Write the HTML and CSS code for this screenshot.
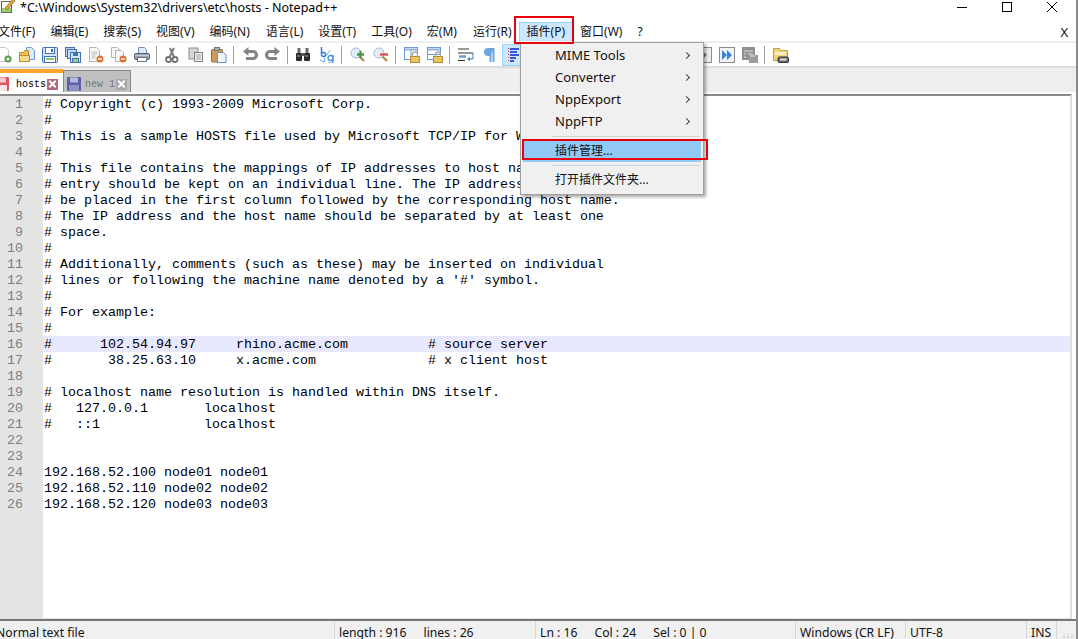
FILE: index.html
```html
<!DOCTYPE html>
<html>
<head>
	<title>Notepad++</title>
	<link rel="stylesheet" href="styles.css">
</head>
<body>
	<div class="window">
		<div class="titlebar">
			<svg class="app-icon" width="16" height="16" viewBox="0 0 16 16"><rect x="1.500" y="2.500" width="10" height="11" fill="#fff" stroke="#666"/><rect x="2" y="9" width="9" height="4" fill="#9ad067"/><path d="M5 9 L13 0 L15 2 L7 11 Z" fill="#e8a33a" stroke="#7a5a20" stroke-width=".6"/></svg>
			<span class="title">*C:\Windows\System32\drivers\etc\hosts - Notepad++</span>
			<div class="win-btns">
				<svg width="12" height="12" viewBox="0 0 12 12"><path d="M1 6.500H11" stroke="#000"/></svg>
				<svg width="12" height="12" viewBox="0 0 12 12"><rect x="1.500" y="1.500" width="9" height="9" fill="none" stroke="#000"/></svg>
				<svg width="12" height="12" viewBox="0 0 12 12"><path d="M1 1L11 11M11 1L1 11" stroke="#000"/></svg>
			</div>
		</div>
		<div class="menubar">
			<span class="menu-item">文件(F)</span>
			<span class="menu-item">编辑(E)</span>
			<span class="menu-item">搜索(S)</span>
			<span class="menu-item">视图(V)</span>
			<span class="menu-item">编码(N)</span>
			<span class="menu-item">语言(L)</span>
			<span class="menu-item">设置(T)</span>
			<span class="menu-item">工具(O)</span>
			<span class="menu-item">宏(M)</span>
			<span class="menu-item">运行(R)</span>
			<span class="menu-item active">插件(P)</span>
			<span class="menu-item">窗口(W)</span>
			<span class="menu-item">?</span>
			<span class="menu-close">X</span>
		</div>
		<div class="toolbar" id="toolbar"></div>
		<div class="tabbar">
			<div class="tab tab-on">
				<svg width="16" height="16" viewBox="0 0 16 16"><rect x="1" y="1" width="14" height="14" rx="1" fill="#e2505f"/><rect x="4" y="1.500" width="8" height="5" fill="#f6c9cc"/><rect x="3" y="9" width="10" height="6" fill="#fbe4e4"/></svg>
				<span>hosts</span>
				<i class="tab-x red"></i>
			</div>
			<div class="tab tab-off">
				<svg width="16" height="16" viewBox="0 0 16 16"><rect x="1" y="1" width="14" height="14" rx="1" fill="#5d5fa8"/><rect x="4" y="1.500" width="8" height="5" fill="#b9bbdc"/><rect x="3" y="9" width="10" height="6" fill="#8f91c4"/></svg>
				<span>new 1</span>
				<i class="tab-x gray"></i>
			</div>
		</div>
		<div class="editor">
			<div class="gutter" id="gutter"></div>
			<pre class="code" id="code"></pre>
		</div>
		<div class="statusbar">
			<div class="st st-type">Normal text file</div>
			<div class="st st-len"><span>length : 916</span><span>lines : 26</span></div>
			<div class="st st-pos"><span>Ln : 16</span><span>Col : 24</span><span>Sel : 0 | 0</span></div>
			<div class="st st-eol">Windows (CR LF)</div>
			<div class="st st-enc">UTF-8</div>
			<div class="st st-ins">INS</div>
			<svg class="grip" width="12" height="4" viewBox="0 0 12 4"><path d="M1 3h2M5 3h2M9 3h2M5 0h2M9 0h2" stroke="#b5b5b5" stroke-width="1"/></svg>
		</div>
	</div>

	<div class="plugin-menu">
		<div class="pm-item pm-lat">MIME Tools<b></b></div>
		<div class="pm-item pm-lat">Converter<b></b></div>
		<div class="pm-item pm-lat">NppExport<b></b></div>
		<div class="pm-item pm-lat">NppFTP<b></b></div>
		<div class="pm-sep"></div>
		<div class="pm-item pm-on">插件管理...</div>
		<div class="pm-sep"></div>
		<div class="pm-item">打开插件文件夹...</div>
	</div>
	<div class="mark mark-menu"></div>
	<div class="mark mark-item"></div>

<script>
	// editor text
	var lines = [
		"# Copyright (c) 1993-2009 Microsoft Corp.",
		"#",
		"# This is a sample HOSTS file used by Microsoft TCP/IP for Windows.",
		"#",
		"# This file contains the mappings of IP addresses to host names. Each",
		"# entry should be kept on an individual line. The IP address should",
		"# be placed in the first column followed by the corresponding host name.",
		"# The IP address and the host name should be separated by at least one",
		"# space.",
		"#",
		"# Additionally, comments (such as these) may be inserted on individual",
		"# lines or following the machine name denoted by a '#' symbol.",
		"#",
		"# For example:",
		"#",
		"#      102.54.94.97     rhino.acme.com          # source server",
		"#       38.25.63.10     x.acme.com              # x client host",
		"",
		"# localhost name resolution is handled within DNS itself.",
		"#   127.0.0.1       localhost",
		"#   ::1             localhost",
		"",
		"",
		"192.168.52.100 node01 node01",
		"192.168.52.110 node02 node02",
		"192.168.52.120 node03 node03"
	];
	var gutter = document.getElementById("gutter");
	var code = document.getElementById("code");
	lines.forEach(function(txt, i){
		var n = document.createElement("div");
		n.className = "line-no";
		n.textContent = i + 1;
		gutter.appendChild(n);
		var l = document.createElement("div");
		l.className = (i == 15) ? "line cur" : "line";
		l.textContent = txt || " ";
		code.appendChild(l);
	});

	// toolbar icons, 0 = separator
	var lock = '<rect x="6.500" y="9.500" width="9" height="6" fill="#ecc55f" stroke="#b08d33"/><path d="M8.500 9.500V7.500a2.500 2.500 0 0 1 5 0v2" fill="none" stroke="#a9a9a9" stroke-width="1.400"/>';
	var g = {
		newf: '<path d="M2.500 .5h7l3 3v11h-10z" fill="#fff" stroke="#c4c4c4"/><circle cx="12" cy="12" r="3.500" fill="#4f9a48"/><path d="M10 12h4M12 10v4" stroke="#fff"/>',
		open: '<path d="M7.500 .5h5l3 3v9h-8z" fill="#dce9f8" stroke="#6f9bd3"/><path d="M.5 5.500h4l1-2h4v11h-9z" fill="#eebf5a" stroke="#b88d30"/><rect x=".5" y="8.500" width="10" height="6" fill="#f7d98d" stroke="#b88d30"/>',
		save: '<rect x=".5" y=".5" width="15" height="15" rx="1" fill="#d6e4f6" stroke="#3f6fb5"/><rect x="3.500" y=".5" width="9" height="6" fill="#fff" stroke="#3f6fb5"/><rect x="9" y="2" width="2" height="3" fill="#3f6fb5"/><rect x="2.500" y="9.500" width="11" height="6" fill="#fff" stroke="#3f6fb5"/><rect x="4" y="11" width="8" height="2" fill="#8cc468"/>',
		saveall: '<rect x=".5" y=".5" width="9" height="9" fill="#b9cfeb" stroke="#3f6fb5"/><rect x="2.500" y="2.500" width="9" height="9" fill="#c9daf1" stroke="#3f6fb5"/><rect x="5.500" y="5.500" width="10" height="10" fill="#d6e4f6" stroke="#3f6fb5"/><rect x="8" y="6" width="5" height="3" fill="#3f6fb5"/><rect x="7.500" y="11.500" width="6" height="4" fill="#9ccf7c" stroke="#3f6fb5"/>',
		close: '<path d="M1.500 .5h7l3 3v11h-10z" fill="#f7f7f7" stroke="#b5b5b5"/><path d="M3.500 5h6M3.500 7h6M3.500 9h4M3.500 11h4" stroke="#bbb"/><circle cx="12" cy="12" r="3.500" fill="#e2702a"/><path d="M10 12h4" stroke="#fff" stroke-width="1.400"/>',
		closeall: '<path d="M.5 .5h6l2 2v8h-8z" fill="#f7f7f7" stroke="#b5b5b5"/><path d="M4.500 3.500h6l2 2v9h-8z" fill="#f7f7f7" stroke="#b5b5b5"/><circle cx="12" cy="12" r="3.500" fill="#e2702a"/><path d="M10 12h4" stroke="#fff" stroke-width="1.400"/>',
		print: '<path d="M4.500 6V.5h6l2 2V6" fill="#dfe9f6" stroke="#6f8fb8"/><rect x=".5" y="6.500" width="15" height="6" rx="1.500" fill="#9aa5b1" stroke="#59636e"/><rect x="3.500" y="10.500" width="9" height="4" fill="#fff" stroke="#6a7683"/><path d="M1 8.500h14" stroke="#c6ced6"/>',
		cut: '<circle cx="3.500" cy="12.500" r="2.500" fill="none" stroke="#707070" stroke-width="1.800"/><circle cx="10" cy="12.500" r="2.500" fill="none" stroke="#707070" stroke-width="1.800"/><path d="M4.500 10L9 1M9 10L5 1" stroke="#808080" stroke-width="2"/>',
		copy: '<rect x="1" y="1" width="9" height="11" fill="#d6d6d6" stroke="#8c8c8c"/><rect x="6.500" y="5.500" width="8" height="9" fill="#efefef" stroke="#808080"/><path d="M8 8h5M8 10h5M8 12h5" stroke="#a5a5a5"/>',
		paste: '<rect x=".5" y="2.500" width="11" height="12.500" rx="1" fill="#cf9a5c" stroke="#8b6b3d"/><rect x="3.500" y=".5" width="5" height="3" fill="#a8a8a8" stroke="#777"/><path d="M6.500 5.500h6l2.500 2.500v7.500h-8.500z" fill="#eef4fc" stroke="#5f8fd0"/>',
		undo: '<path d="M3 4.500h8a3.500 3.500 0 0 1 0 7H4" fill="none" stroke="#848484" stroke-width="3.200"/><path d="M6.500 0v9L1 4.500z" fill="#848484"/>',
		redo: '<path d="M13 4.500H5a3.500 3.500 0 0 0 0 7h7" fill="none" stroke="#848484" stroke-width="3.200"/><path d="M9.500 0v9L15 4.500z" fill="#848484"/>',
		find: '<rect x="0" y="6" width="6" height="8" rx="1" fill="#2c2c2c"/><rect x="8" y="6" width="6" height="8" rx="1" fill="#2c2c2c"/><rect x="1.500" y="1" width="3" height="5" fill="#6d6d6d"/><rect x="9.500" y="1" width="3" height="5" fill="#6d6d6d"/><rect x="5" y="6" width="4" height="3" fill="#555"/><path d="M1 9h3M9 9h3" stroke="#9fb5c9"/>',
		replace: '<path d="M2.500 0v7.500a2 2 0 0 0 4 0 2 2 0 0 0-4 0" fill="none" stroke="#2f7fd0" stroke-width="1.500"/><path d="M14 8v6a2.500 2.500 0 0 1-4.500 1.500M14 10.500a2.500 2.500 0 1 0 0 1" fill="none" stroke="#4a96dc" stroke-width="1.500"/><path d="M5 12l6-9" stroke="#79b4e8"/><path d="M1 13l4 2 1-3" fill="none" stroke="#67a8e2"/>',
		zoomin: '<circle cx="6" cy="6" r="5" fill="#e2edf8" stroke="#a9bdd2"/><path d="M9.500 9.500l4.500 4.500" stroke="#b58a4a" stroke-width="2.400"/><path d="M7 7.500h7M10.500 4v7" stroke="#4f9a48" stroke-width="2.400"/>',
		zoomout: '<circle cx="6" cy="6" r="5" fill="#e2edf8" stroke="#a9bdd2"/><path d="M9.500 9.500l4.500 4.500" stroke="#b58a4a" stroke-width="2.400"/><path d="M7 7.500h8" stroke="#d9505a" stroke-width="2.400"/>',
		sync1: '<rect x=".5" y=".5" width="13" height="12" fill="#fff" stroke="#6d9ad2"/><path d="M1 2.500h12" stroke="#8fb3e0" stroke-width="2"/><path d="M7 3v9" stroke="#6d9ad2"/>' + lock,
		sync2: '<rect x=".5" y=".5" width="13" height="12" fill="#fff" stroke="#6d9ad2"/><path d="M1 2.500h12" stroke="#8fb3e0" stroke-width="2"/><path d="M1 7.500h12" stroke="#6d9ad2"/>' + lock,
		wrap: '<path d="M0 2h11M0 6h15M0 13.500h7" stroke="#333" stroke-width="1.200"/><path d="M1 9.500h7" stroke="#6d9ad2" stroke-width="2.500"/><path d="M15 6v6h-4" fill="none" stroke="#3f7fc8"/><path d="M12 10v4l-3-2z" fill="#3f7fc8"/>',
		para: '<path d="M9.500 15V1.500M12.500 15V1.500" stroke="#6da6e0" stroke-width="2"/><path d="M13.500 1H7a4 4 0 0 0 0 8h2z" fill="#6da6e0"/>',
		indent: '<path d="M4.500 1v14" stroke="#d23c3c" stroke-dasharray="1 2"/><path d="M6 2h9M6 5h7M6 8h9M6 11h6M6 14h4" stroke="#0a1fd0" stroke-width="1.600"/>',
		play: '<rect x=".5" y=".5" width="15" height="15" fill="#eee" stroke="#8c8c8c"/><path d="M5 3l6 5-6 5z" fill="#777"/>',
		next: '<rect x=".5" y=".5" width="15" height="15" fill="#eef3fa" stroke="#8c8c8c"/><path d="M3 3l5 5-5 5zM8 3l5 5-5 5z" fill="#3f83d8"/>',
		macro: '<rect x="0" y="0" width="13" height="13" fill="#909090"/><path d="M2 4h9M2 7h2M6 7h5M2 10h2" stroke="#e0e0e0"/><rect x="7" y="8" width="9" height="8" fill="#9c9c9c"/><path d="M8 9h5" stroke="#e0e0e0"/>',
		folder: '<path d="M.5 1.500h6l1 2h7v10h-14z" fill="#f4d27a" stroke="#b9a23d"/><rect x="2" y="5" width="11" height="3" fill="#fbeec6"/><rect x="5" y="10" width="10.500" height="5.500" rx="1.500" fill="#6b6b6b" stroke="#333"/><rect x="7" y="11.500" width="6.500" height="2" fill="#ddd"/>'
	};
	var bar = ["newf","open","save","saveall","close","closeall","print",0,"cut","copy","paste",0,"undo","redo",0,"find","replace",0,"zoomin","zoomout",0,"sync1","sync2",0,"wrap","para","indent","play","play","play","play","play","play","play",0,"play","next","macro",0,"folder"];
	var toolbar = document.getElementById("toolbar");
	bar.forEach(function(k){
		var el = document.createElement("span");
		if(k === 0){
			el.className = "tb-sep";
		}else{
			el.className = (k == "indent") ? "tb-btn tb-on" : "tb-btn";
			el.innerHTML = '<svg width="16" height="16" viewBox="0 0 16 16">' + g[k] + '</svg>';
		}
		toolbar.appendChild(el);
	});
</script>
</body>
</html>
```

FILE: styles.css
```css
*{
	margin: 0;
	padding: 0;
	box-sizing: border-box;
}
html, body{
	height: 100%;
	overflow: hidden;
	background: #fff;
}
body{
	font-family: "Liberation Sans", "Noto Sans CJK SC", sans-serif;
	font-size: 12px;
	color: #000;
}
.window{
	height: 639px;
	width: 1078px;
	display: flex;
	flex-direction: column;
	overflow: hidden;
	border-right: 2px solid #8a8a8a;
}
.titlebar{
	height: 15px;
	display: flex;
	align-items: center;
	flex: none;
	background: #fff;
}
.app-icon{
	margin-left: 0;
	margin-top: -2px;
	flex: none;
}
.title{
	margin-left: 4px;
	font-family: "Noto Sans", sans-serif;
	font-size: 12.500px;
	white-space: nowrap;
}
.win-btns{
	margin-left: auto;
	margin-top: -1px;
	display: flex;
	gap: 33px;
	padding-right: 18px;
}
.menubar{
	height: 26px;
	padding-top: 8px;
	display: flex;
	align-items: center;
	flex: none;
	font-family: "Noto Sans", "Noto Sans CJK SC", sans-serif;
	font-size: 12px;
	color: #111;
}
.menu-item{
	padding: 0 7.500px;
	white-space: nowrap;
	line-height: 20px;
}
.menu-item:first-child{
	margin-left: -9.500px;
}
.menu-item:nth-child(6), .menu-item:nth-child(10){
	margin-left: 1px;
}
.menu-item.active{
	background: #cce8ff;
	outline: 1px solid #99d1ff;
	outline-offset: -1px;
}
.menu-close{
	margin-left: auto;
	margin-right: 8px;
	font-size: 13px;
	color: #111;
}
.toolbar{
	height: 27px;
	flex: none;
	display: flex;
	align-items: center;
	margin-left: -8px;
	border-top: 2px solid #f0f0f0;
	border-bottom: 2px solid #dcdcdc;
	overflow: hidden;
}
.tb-btn{
	width: 23px;
	height: 22px;
	padding-left: 4px;
	display: inline-flex;
	align-items: center;
	flex: none;
}
.tb-on{
	background: #cce8ff;
	outline: 1px solid #99d1ff;
	outline-offset: -1px;
	margin-left: 2px;
	margin-right: -2px;
	padding-left: 2px;
}
.tb-sep{
	width: 1px;
	height: 18px;
	background: #a0a0a0;
	margin: 0 4px 0 3px;
	flex: none;
}
.tabbar{
	height: 26px;
	flex: none;
	background: #efefef;
	border-bottom: 2px solid #fff;
	display: flex;
	align-items: flex-end;
}
.tab{
	display: flex;
	align-items: center;
	font-family: "Liberation Mono", monospace;
	font-size: 10px;
	white-space: nowrap;
}
.tab svg{
	flex: none;
}
.tab-on{
	width: 69px;
	height: 23px;
	margin-left: -6px;
	padding-top: 3px;
	background: #fff;
	border-top: 4px solid #f9a333;
}
.tab-on svg{
	margin-right: 6px;
}
.tab-off{
	width: 68px;
	height: 22px;
	background: #c0c0c0;
	color: #777;
	border: 1px solid #8a8a8a;
	border-bottom: 0;
	padding: 5px 0 0 2px;
}
.tab-off svg{
	margin-right: 3px;
}
.tab-x{
	width: 11px;
	height: 11px;
	display: block;
	flex: none;
	position: relative;
	margin-left: auto;
}
.tab-x.red{
	background: #b06a78;
	margin-right: 5px;
}
.tab-x.gray{
	background: #a8a8a8;
	margin-right: 3px;
}
.tab-x:before, .tab-x:after{
	content: "";
	position: absolute;
	left: 1px;
	top: 4.500px;
	width: 9px;
	height: 2px;
	background: #fff;
	transform: rotate(45deg);
}
.tab-x:after{
	transform: rotate(-45deg);
}
.editor{
	flex: 1;
	min-height: 0;
	display: flex;
	border-top: 2px solid #8a8a8a;
	border-bottom: 1px solid #e0e0e0;
	margin-right: 4px;
	border-right: 2px solid #ddd;
	background: #fff;
}
.gutter{
	width: 43px;
	flex: none;
	background: #e4e4e4;
	color: #808080;
	font-family: "Liberation Mono", monospace;
	font-size: 13.330px;
	text-align: right;
	padding-right: 20px;
}
.line-no{
	height: 16px;
	line-height: 18px;
}
.code{
	flex: 1;
	font-family: "Liberation Mono", monospace;
	font-size: 13.330px;
	overflow: hidden;
}
.line{
	height: 16px;
	line-height: 18px;
	padding-left: 1px;
	white-space: pre;
}
.line.cur{
	background: #e8e8ff;
}
.statusbar{
	height: 20px;
	flex: none;
	display: flex;
	position: relative;
	background: #f0f0f0;
	border-top: 2px solid #777;
	font-family: "Noto Sans", sans-serif;
	font-size: 12.200px;
	line-height: 24px;
	color: #111;
	white-space: nowrap;
	overflow: hidden;
}
.st{
	border-right: 1px solid #d8d8d8;
	padding-left: 4px;
	flex: none;
}
.st-type{
	width: 339px;
	margin-left: -4px;
	padding-left: 0;
}
.st-len{
	width: 201px;
	display: flex;
	gap: 17px;
}
.st-pos{
	width: 260px;
	display: flex;
	gap: 17px;
}
.st-eol{
	width: 110px;
}
.st-enc{
	width: 121px;
}
.st-ins{
	width: 30px;
}
.grip{
	position: absolute;
	right: 2px;
	bottom: 1px;
}
.plugin-menu{
	position: absolute;
	left: 520px;
	top: 42px;
	width: 184px;
	height: 153px;
	background: #f0f0f0;
	border: 1px solid #a0a0a0;
	box-shadow: 2px 2px 3px rgba(0,0,0,.35);
	padding: 2px;
	font-family: "Noto Sans", "Noto Sans CJK SC", sans-serif;
	font-size: 12px;
	color: #111;
}
.pm-item{
	height: 22px;
	line-height: 22px;
	padding-left: 32px;
	position: relative;
	white-space: nowrap;
}
.pm-lat{
	font-size: 13px;
	line-height: 20px;
}
.pm-item b{
	position: absolute;
	right: 12px;
	top: 8px;
	width: 5px;
	height: 5px;
	border-top: 1px solid #444;
	border-right: 1px solid #444;
	transform: rotate(45deg);
}
.pm-on{
	background: #91c9f7;
}
.pm-sep{
	height: 1px;
	background: #d5d5d5;
	margin: 3px 1px 3px 29px;
}
.mark{
	position: absolute;
	border: 2px solid #e8000d;
	pointer-events: none;
}
.mark-menu{
	left: 514px;
	top: 16px;
	width: 60px;
	height: 28px;
}
.mark-item{
	left: 522px;
	top: 139px;
	width: 186px;
	height: 21px;
}
```
